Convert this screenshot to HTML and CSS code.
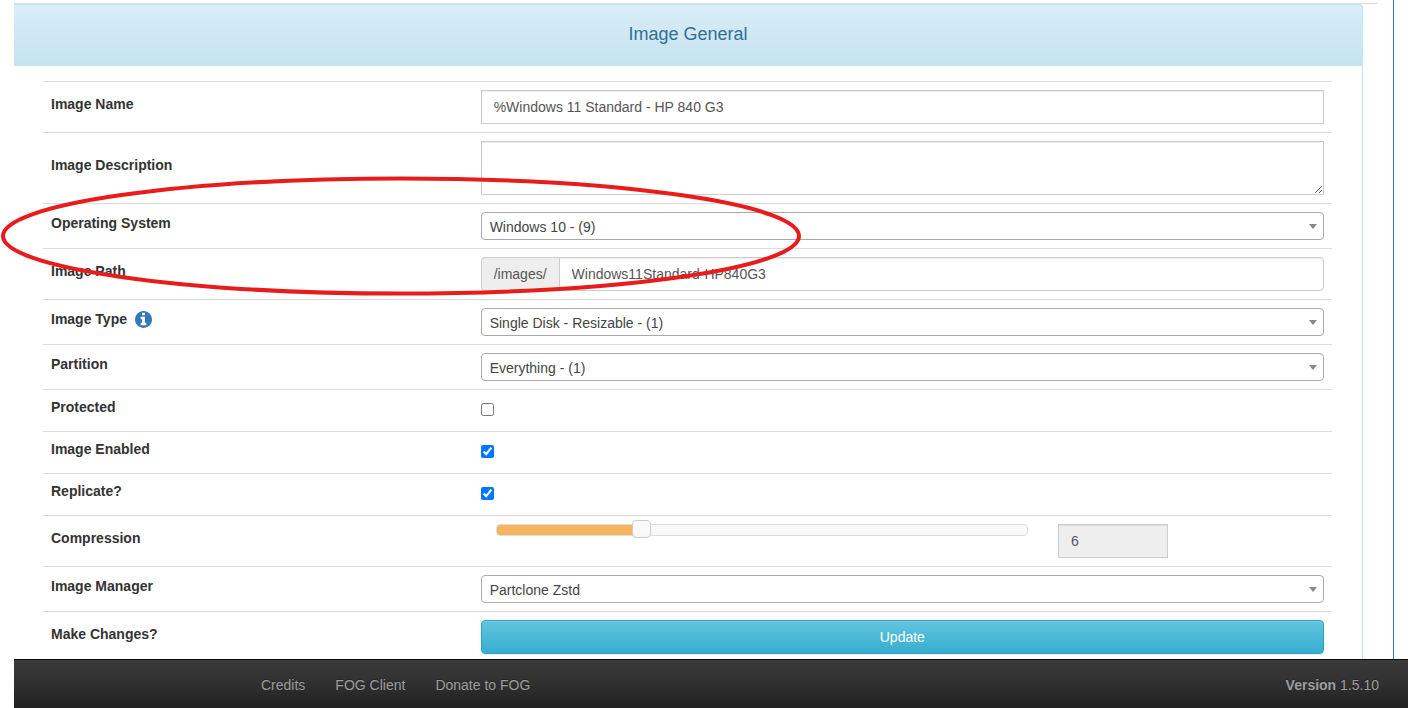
FILE: index.html
```html
<!DOCTYPE html>
<html lang="en">
<head>
<meta charset="utf-8">
<title>Image General</title>
<link rel="stylesheet" href="styles.css">
</head>
<body>
<main class="content">
  <section class="panel">
    <header class="panel-heading"><h4 class="panel-title">Image General</h4></header>
    <form class="panel-body">
      <div class="row">
        <div class="row-label"><label for="name">Image Name</label></div>
        <div class="row-field"><input class="control" type="text" id="name" value="%Windows 11 Standard - HP 840 G3"></div>
      </div>
      <div class="row">
        <div class="row-label"><label for="description">Image Description</label></div>
        <div class="row-field"><textarea class="control control-area" id="description"></textarea></div>
      </div>
      <div class="row">
        <div class="row-label"><label for="os">Operating System</label></div>
        <div class="row-field"><div class="select"><select id="os"><option>Windows 10 - (9)</option></select></div></div>
      </div>
      <div class="row">
        <div class="row-label"><label for="path">Image Path</label></div>
        <div class="row-field">
          <div class="group"><span class="addon">/images/</span><input class="control" type="text" id="path" value="Windows11Standard-HP840G3"></div>
        </div>
      </div>
      <div class="row">
        <div class="row-label">
          <label for="type">Image Type</label>
          <svg class="info" viewBox="0 128 1536 1536" aria-hidden="true"><path d="M1024 1376v-160q0-14-9-23t-23-9h-96v-512q0-14-9-23t-23-9h-320q-14 0-23 9t-9 23v160q0 14 9 23t23 9h96v320h-96q-14 0-23 9t-9 23v160q0 14 9 23t23 9h448q14 0 23-9t9-23zm-128-896v-160q0-14-9-23t-23-9h-192q-14 0-23 9t-9 23v160q0 14 9 23t23 9h192q14 0 23-9t9-23zm640 416q0 209-103 385.5t-279.5 279.5-385.5 103-385.5-103-279.5-279.5-103-385.5 103-385.5 279.5-279.5 385.5-103 385.5 103 279.5 279.5 103 385.5z"/></svg>
        </div>
        <div class="row-field"><div class="select"><select id="type"><option>Single Disk - Resizable - (1)</option></select></div></div>
      </div>
      <div class="row">
        <div class="row-label"><label for="partition">Partition</label></div>
        <div class="row-field"><div class="select"><select id="partition"><option>Everything - (1)</option></select></div></div>
      </div>
      <div class="row">
        <div class="row-label"><label for="protected">Protected</label></div>
        <div class="row-field"><input class="check" type="checkbox" id="protected"></div>
      </div>
      <div class="row">
        <div class="row-label"><label for="enabled">Image Enabled</label></div>
        <div class="row-field"><input class="check" type="checkbox" id="enabled" checked></div>
      </div>
      <div class="row">
        <div class="row-label"><label for="replicate">Replicate?</label></div>
        <div class="row-field"><input class="check" type="checkbox" id="replicate" checked></div>
      </div>
      <div class="row">
        <div class="row-label"><label for="compression">Compression</label></div>
        <div class="row-field compression">
          <div class="compression-slider"><div class="slider" style="--value: 27.3%"><input type="range" id="compression" min="0" max="22" value="6"></div></div>
          <div class="compression-value"><input class="control" type="text" value="6" readonly aria-label="Compression value"></div>
        </div>
      </div>
      <div class="row">
        <div class="row-label"><label for="manager">Image Manager</label></div>
        <div class="row-field"><div class="select"><select id="manager"><option>Partclone Zstd</option></select></div></div>
      </div>
      <div class="row">
        <div class="row-label"><label for="update">Make Changes?</label></div>
        <div class="row-field"><button class="update" type="button" id="update">Update</button></div>
      </div>
    </form>
  </section>
</main>
<svg class="annotation" width="802" height="120" aria-hidden="true"><ellipse cx="401" cy="60" rx="398" ry="57.5"/></svg>
<footer class="footer">
  <nav class="footer-links">
    <a href="#">Credits</a>
    <a href="#">FOG Client</a>
    <a href="#">Donate to FOG</a>
  </nav>
  <p class="version"><b>Version</b> 1.5.10</p>
</footer>
</body>
</html>
```
FILE: styles.css
```css
* { box-sizing: border-box; }

body {
  margin: 0;
  background: #fff;
  color: #333;
  font: 14px/20px "Liberation Sans", Arial, sans-serif;
}

input, select, textarea, button { font: inherit; }

.content {
  display: flex;
  flex-direction: column;
  min-height: 100vh;
  margin: 0 14px;
  padding: 3px 15px 0 0;
  border-right: 1px solid #337ab7;
}

.panel {
  display: flex;
  flex: 1;
  flex-direction: column;
  border-top: 1px solid #ddd;
}

.panel-heading,
.panel-body {
  margin: 0 15px 0 0;
  border-right: 1px solid #bce8f1;
}

.panel-heading {
  padding: 19px 0 22px;
  border-top: 1px solid #bce8f1;
  border-top-right-radius: 4px;
  background: linear-gradient(#d9edf7, #c4e3f0);
}

.panel-title {
  margin: 0;
  color: #31708f;
  font-size: 18px;
  font-weight: 400;
  line-height: 20px;
  text-align: center;
}

.panel-body {
  flex: 1;
  padding: 15px 30px 0 29px;
}

.row {
  display: grid;
  grid-template-columns: 1fr 2fr;
  align-items: center;
  border-top: 1px solid #ddd;
}

.row-label {
  display: flex;
  align-items: center;
  gap: 8px;
  padding: 8px 8px 14px;
  font-weight: 700;
  line-height: 19px;
}

.row-field { padding: 8px; }

.info {
  width: 17px;
  height: 17px;
  fill: #337ab7;
}

.control {
  display: block;
  width: 100%;
  height: 34px;
  padding: 6px 12px;
  border: 1px solid #ccc;
  border-radius: 0;
  background: #fff;
  box-shadow: inset 0 1px 1px rgba(0, 0, 0, .075);
  color: #555;
}

.control[readonly] { background: #eee; }

.control-area {
  height: 54px;
  resize: vertical;
}

.group { display: flex; }

.group .control {
  flex: 1;
  border-radius: 0 4px 4px 0;
}

.addon {
  padding: 6px 12px;
  border: 1px solid #ccc;
  border-right: 0;
  border-radius: 4px 0 0 4px;
  background: #eee;
  color: #555;
}

.select { position: relative; }

.select select {
  display: block;
  width: 100%;
  height: 28px;
  padding: 1px 8px 0;
  border: 1px solid #aaa;
  border-radius: 4px;
  background: #fff;
  color: #444;
  appearance: none;
}

.select::after {
  position: absolute;
  top: 12px;
  right: 7px;
  border: 4px solid transparent;
  border-top: 5px solid #888;
  border-bottom: 0;
  content: "";
  pointer-events: none;
}

.check {
  display: block;
  width: 13px;
  height: 13px;
  margin: 0 0 2px;
}

.compression {
  display: grid;
  grid-template-columns: 8fr 2fr 2fr;
}

.compression-slider,
.compression-value { padding: 0 15px; }

.slider {
  height: 12px;
  border: 1px solid #ddd;
  border-radius: 4px;
  background: linear-gradient(to right, #f6b45e var(--value), #f9f9f9 var(--value));
}

.slider input {
  display: block;
  width: calc(100% + 20px);
  height: 20px;
  margin: -6px -10px -4px;
  background: none;
  appearance: none;
}

.slider input::-webkit-slider-thumb {
  width: 19px;
  height: 18px;
  border: 1px solid #ccc;
  border-radius: 4px;
  background: linear-gradient(#fafafa 50%, #f6f6f6);
  appearance: none;
}

.update {
  display: block;
  width: 100%;
  padding: 6px 12px;
  border: 1px solid #28a4c9;
  border-radius: 4px;
  background: linear-gradient(#62c4de, #37aecf);
  box-shadow: inset 0 1px 0 rgba(255, 255, 255, .15), 0 1px 1px rgba(0, 0, 0, .075);
  color: #fff;
}

.annotation {
  position: absolute;
  top: 176px;
  left: 0;
  fill: none;
  stroke: #e81c1c;
  stroke-width: 4px;
  pointer-events: none;
}

.footer {
  position: fixed;
  right: 0;
  bottom: 0;
  left: 14px;
  display: flex;
  justify-content: space-between;
  padding: 15px 29px 13px 247px;
  border-top: 1px solid #080808;
  background: linear-gradient(#3c3c3c, #222);
  color: #9d9d9d;
  text-shadow: 0 -1px 0 rgba(0, 0, 0, .25);
}

.footer-links {
  display: flex;
  gap: 30px;
}

.footer-links a {
  color: inherit;
  text-decoration: none;
}

.version { margin: 0; }
```
